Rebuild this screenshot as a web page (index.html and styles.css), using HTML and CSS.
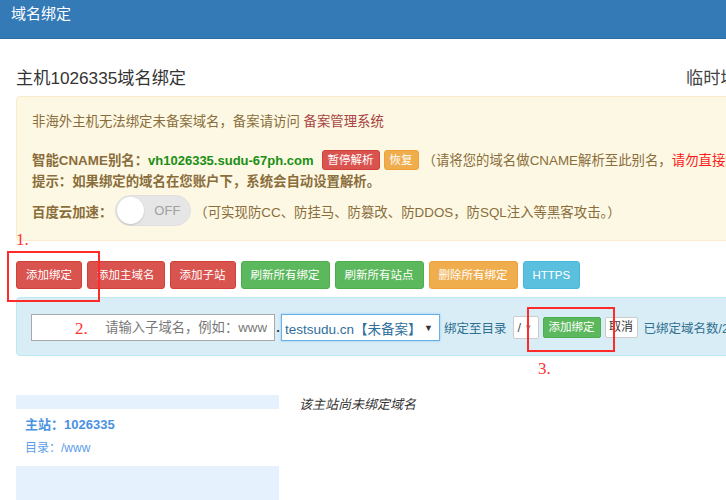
FILE: index.html
```html
<!DOCTYPE html>
<html lang="zh-CN">
<head>
<meta charset="utf-8">
<title>域名绑定</title>
<link rel="stylesheet" href="styles.css">
</head>
<body>
<div class="header">域名绑定</div>
<div class="main">
  <div class="title-row">
    <div class="title">主机1026335域名绑定</div>
    <div class="title-right">临时域名</div>
  </div>

  <div class="alert">
    <p class="a-line1">非海外主机无法绑定未备案域名，备案请访问 <a class="link-red">备案管理系统</a></p>
    <p class="a-line2"><b>智能CNAME别名：</b><b class="green">vh1026335.sudu-67ph.com</b><span class="mini mini-red">暂停解析</span><span class="mini mini-orange">恢复</span>（请将您的域名做CNAME解析至此别名，<span class="bright-red">请勿直接解析到IP</span></p>
    <p class="a-line3"><b>提示：如果绑定的域名在您账户下，系统会自动设置解析。</b></p>
    <div class="a-line4">
      <b>百度云加速：</b>
      <span class="toggle"><span class="knob"></span><span class="off">OFF</span></span>
      <span class="note">（可实现防CC、防挂马、防篡改、防DDOS，防SQL注入等黑客攻击。）</span>
    </div>
  </div>

  <div class="btn-row">
    <span class="btn btn-red">添加绑定</span>
    <span class="btn btn-red">添加主域名</span>
    <span class="btn btn-red">添加子站</span>
    <span class="btn btn-green">刷新所有绑定</span>
    <span class="btn btn-green">刷新所有站点</span>
    <span class="btn btn-orange">删除所有绑定</span>
    <span class="btn btn-blue">HTTPS</span>
  </div>

  <div class="form-panel">
    <input class="sub-input" type="text" placeholder="请输入子域名，例如：www">
    <span class="dot">.</span>
    <div class="fake-select"><span>testsudu.cn【未备案】</span><span class="arrow">▼</span></div>
    <span class="label">绑定至目录</span>
    <div class="small-select"><span>/</span><span class="arrow-s">▼</span></div>
    <span class="sbtn sbtn-green">添加绑定</span>
    <span class="sbtn sbtn-white">取消</span>
    <span class="label count">已绑定域名数/20</span>
  </div>

  <div class="lower">
    <div class="site-panel">
      <div class="strip"></div>
      <div class="site-body">
        <div class="site-name">主站：1026335</div>
        <div class="site-dir">目录：/www</div>
      </div>
      <div class="block"></div>
    </div>
    <div class="empty">该主站尚未绑定域名</div>
  </div>

  <span class="anno anno1">1.</span>
  <span class="anno anno2">2.</span>
  <span class="anno anno3">3.</span>
  <span class="anno-box box1"></span>
  <span class="anno-box box2"></span>
</div>
</body>
</html>
```

FILE: styles.css
```css
html, body {
  margin: 0;
  padding: 0;
  overflow: hidden;
  background: #fff;
}
body {
  font-family: "Liberation Sans", "Noto Sans CJK SC", sans-serif;
  color: #333;
  width: 726px;
  height: 500px;
}
.header {
  box-sizing: border-box;
  height: 39px;
  background: #337ab7;
  border-bottom: 1px solid #2e6da4;
  color: #fff;
  font-size: 15px;
  line-height: 20px;
  padding: 4px 11px 0;
}
.main {
  position: relative;
  width: 1100px;
  padding: 0 16px;
}
.title-row {
  display: flex;
  padding-top: 27px;
  height: 24px;
  line-height: 24px;
  font-size: 17.2px;
}
.title {
  flex: 0 0 670px;
  color: #333;
}
.title-right {
  color: #444;
}
.alert {
  margin-top: 6px;
  background: #fcf8e3;
  border: 1px solid #faebcc;
  border-radius: 4px;
  color: #8a6d3b;
  font-size: 13.4px;
  padding: 15px 15px 14px;
}
.alert p { margin: 0; }
.a-line1 { line-height: 20px; }
.link-red { color: #a94442; }
.a-line2 { margin-top: 18px !important; line-height: 21px; }
.a-line3 { line-height: 21px; }
.green { color: #1a8f14; margin-right: 8px; font-size: 13px; }
.bright-red { color: #ff1a1a; }
.mini {
  display: inline-block;
  box-sizing: border-box;
  height: 20px;
  line-height: 18px;
  padding: 0 5px;
  border: 1px solid;
  border-radius: 3px;
  color: #fff;
  font-size: 11.5px;
  vertical-align: top;
  margin-right: 4px;
}
.mini-red { background: #d9534f; border-color: #d43f3a; }
.mini-orange { background: #f0ad4e; border-color: #eea236; }
.a-line4 {
  margin-top: 3px;
  display: flex;
  align-items: center;
  height: 31px;
}
.toggle {
  box-sizing: border-box;
  margin-left: 3px;
  width: 76px;
  height: 31px;
  border-radius: 16px;
  background: #e6e6e6;
  border: 1px solid #e0e0e0;
  display: flex;
  align-items: center;
  padding-left: 1px;
}
.knob {
  width: 27px;
  height: 27px;
  border-radius: 50%;
  background: #fff;
  box-shadow: 0 1px 2px rgba(0,0,0,0.15);
}
.off {
  margin-left: 10px;
  color: #a0a0a0;
  font-size: 13px;
}
.note { margin-left: 3px; }

.btn-row {
  display: flex;
  gap: 5px;
  margin-top: 20px;
}
.btn {
  box-sizing: border-box;
  height: 28px;
  line-height: 26px;
  padding: 0 9px;
  border: 1px solid;
  border-radius: 3px;
  color: #fff;
  font-size: 11.5px;
  white-space: nowrap;
}
.btn-red { background: #d9534f; border-color: #d43f3a; }
.btn-green { background: #5cb85c; border-color: #4cae4c; }
.btn-orange { background: #f0ad4e; border-color: #eea236; }
.btn-blue { background: #5bc0de; border-color: #46b8da; }

.form-panel {
  margin-top: 8px;
  background: #d9edf7;
  border: 1px solid #bce8f1;
  border-radius: 4px;
  padding: 16px 14px 14px;
  display: flex;
  align-items: center;
  color: #31708f;
  font-size: 13px;
}
.sub-input {
  box-sizing: border-box;
  width: 244px;
  height: 27px;
  margin: 0;
  border: 1px solid #a9a9a9;
  background: #fff;
  text-align: right;
  padding: 0 7px 0 0;
  font-family: "Liberation Sans", "Noto Sans CJK SC", sans-serif;
  font-size: 13.3px;
}
.sub-input::placeholder { color: #777; }
.dot {
  width: 6px;
  color: #333;
  font-weight: bold;
  text-align: center;
}
.fake-select {
  box-sizing: border-box;
  width: 159px;
  height: 27px;
  background: #fff;
  border: 1px solid #66afe9;
  box-shadow: 0 0 2px rgba(102,175,233,0.6);
  display: flex;
  align-items: center;
  justify-content: space-between;
  padding: 0 6px 0 3px;
  color: #2f6f9c;
  font-size: 13.5px;
}
.arrow { font-size: 9px; color: #333; }
.label { margin-left: 4px; font-size: 12.5px; }
.small-select {
  box-sizing: border-box;
  margin-left: 6px;
  width: 26px;
  height: 23px;
  background: #fff;
  border: 1px solid #ccc;
  border-radius: 2px;
  display: flex;
  align-items: center;
  gap: 3px;
  padding-left: 4px;
  overflow: hidden;
  color: #555;
  font-size: 13px;
}
.arrow-s { font-size: 8px; color: #888; }
.sbtn {
  box-sizing: border-box;
  height: 21px;
  line-height: 19px;
  border: 1px solid;
  border-radius: 2px;
  font-size: 11.5px;
  white-space: nowrap;
}
.sbtn-green {
  margin-left: 4px;
  width: 58px;
  text-align: center;
  background: #5cb85c;
  border-color: #4cae4c;
  color: #fff;
}
.sbtn-white {
  margin-left: 4px;
  width: 33px;
  text-align: center;
  background: #fff;
  border-color: #ccc;
  color: #333;
  font-size: 12px;
}
.count { margin-left: 6px; }

.lower {
  display: flex;
  align-items: flex-start;
  margin-top: 39px;
}
.site-panel {
  width: 263px;
}
.strip { height: 14px; background: #e5f1fd; }
.site-body {
  height: 57px;
  padding-left: 9px;
}
.site-name {
  padding-top: 7px;
  line-height: 18px;
  font-size: 13px;
  font-weight: bold;
  color: #4a92e2;
}
.site-dir {
  margin-top: 5px;
  line-height: 18px;
  font-size: 12px;
  color: #5b9de6;
}
.block { height: 40px; background: #e5f1fd; }
.empty {
  margin-left: 20px;
  line-height: 20px;
  font-size: 13px;
  font-style: italic;
  color: #333;
}

.anno {
  position: absolute;
  font-family: "Liberation Serif", serif;
  font-size: 17px;
  line-height: 17px;
  color: #ff3333;
}
.anno1 { left: 16px; top: 192px; }
.anno2 { left: 75px; top: 281px; }
.anno3 { left: 538px; top: 321px; }
.anno-box {
  position: absolute;
  box-sizing: border-box;
  border: 2px solid #ff2a2a;
}
.box1 { left: 7px; top: 212px; width: 93px; height: 51px; }
.box2 { left: 527px; top: 268px; width: 88px; height: 45px; }
```
